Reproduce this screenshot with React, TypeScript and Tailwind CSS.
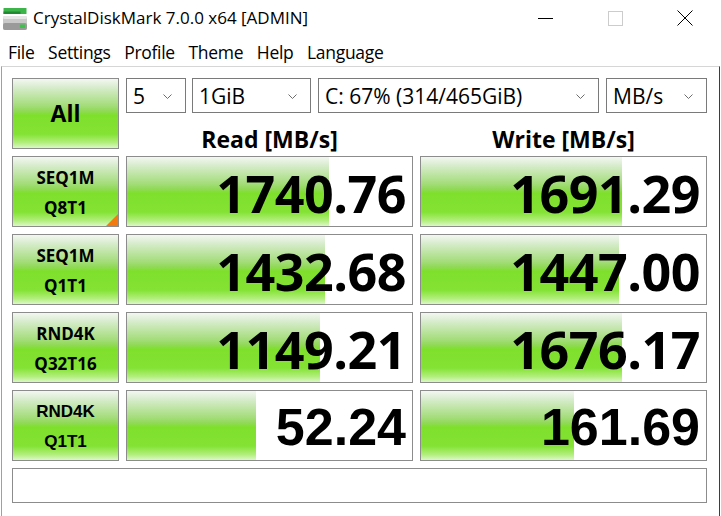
import React from "react";

const GREEN =
  "bg-[linear-gradient(to_bottom,#f3f7f1_0%,#d3ebc7_14%,#a5dd7c_38%,#8fd955_47%,#7fe02c_52%,#84e234_80%,#b2ee7c_92%,#dbf8c6_100%)]";

const menus = ["File", "Settings", "Profile", "Theme", "Help", "Language"];

const rows = [
  { l1: "SEQ1M", l2: "Q8T1", read: "1740.76", rw: 202, write: "1691.29", ww: 201, mark: true },
  { l1: "SEQ1M", l2: "Q1T1", read: "1432.68", rw: 198, write: "1447.00", ww: 198 },
  { l1: "RND4K", l2: "Q32T16", read: "1149.21", rw: 193, write: "1676.17", ww: 201 },
  { l1: "RND4K", l2: "Q1T1", read: "52.24", rw: 129, write: "161.69", ww: 153, narrow: true },
];

const Chevron = () => (
  <svg width="9" height="5" viewBox="0 0 9 5" className="shrink-0">
    <path d="M0.5 0.5 L4.5 4.5 L8.5 0.5" fill="none" stroke="#6d6d6d" strokeWidth="1" />
  </svg>
);

const Combo = ({ w, text }: { w: string; text: string }) => (
  <div className={`${w} h-[35px] border border-[#7a7a7a] bg-white flex items-center pl-[6px] pr-[13px] pt-[1px]`}>
    <span className="text-[21px] leading-none flex-1">{text}</span>
    <Chevron />
  </div>
);

const Cell = ({ value, width, narrow }: { value: string; width: number; narrow?: boolean }) => (
  <div
    className={`h-[71px] border border-[#8c8c8c] bg-white ${GREEN} bg-no-repeat flex items-center justify-end pr-[6px] pt-[3px]`}
    style={{ backgroundSize: `${width}px 100%` }}
  >
    <span
      className={
        narrow
          ? "font-['Liberation_Sans',sans-serif] font-bold text-[52px] leading-none"
          : "font-bold text-[52px] leading-none tracking-[-0.5px]"
      }
    >
      {value}
    </span>
  </div>
);

const DriveIcon = () => (
  <svg width="25" height="24" viewBox="0 0 25 24">
    <rect x="0.5" y="1" width="23" height="6" rx="0.5" fill="#3cb44a" />
    <rect x="0.5" y="4.5" width="17" height="2.5" fill="#1f8a30" />
    <rect x="0" y="9" width="24" height="14" rx="2" fill="#c9c9c9" />
    <rect x="0" y="16" width="24" height="7" rx="2" fill="#9a9a9a" />
    <rect x="0" y="9" width="24" height="3" rx="1.5" fill="#e6e6e6" />
    <rect x="17" y="17.5" width="5" height="3.5" fill="#3cc24a" />
  </svg>
);

export default function App() {
  return (
    <div className="w-[721px] h-[516px] bg-white overflow-hidden flex flex-col font-['Open_Sans',sans-serif] text-black">
      {/* title bar */}
      <div className="h-[36px] flex items-center shrink-0">
        <div className="ml-[3px] mt-[2px]">
          <DriveIcon />
        </div>
        <span className="ml-[5px] text-[17px]">CrystalDiskMark 7.0.0 x64 [ADMIN]</span>
        <div className="ml-auto flex h-full">
          <div className="w-[70px] flex items-center justify-center">
            <div className="w-[15px] h-px bg-black" />
          </div>
          <div className="w-[70px] flex items-center justify-center">
            <div className="w-[15px] h-[15px] border border-[#cccccc]" />
          </div>
          <div className="w-[70px] flex items-center justify-center mr-px">
            <svg width="16" height="16" viewBox="0 0 16 16">
              <path d="M0.5 0.5 L15.5 15.5 M15.5 0.5 L0.5 15.5" stroke="#000" strokeWidth="1" />
            </svg>
          </div>
        </div>
      </div>

      {/* menu bar */}
      <div className="h-[30px] flex items-center pl-[8px] pt-[2px] gap-[13.6px] text-[17.5px] tracking-[-0.3px] shrink-0">
        {menus.map((m) => (
          <span key={m}>{m}</span>
        ))}
      </div>

      {/* client area */}
      <div className="flex-1 ml-px mr-px border-t border-t-[#d6d6d6] border-l border-l-[#a0a0a0] border-r border-r-[#1f4756] pl-[10px] pt-[11px]">
        <div className="grid grid-cols-[107px_287px_287px] gap-[7px]">
          <div className={`h-[71px] border border-[#8c8c8c] ${GREEN} flex items-center justify-center`}>
            <span className="font-bold text-[23px] leading-none">All</span>
          </div>
          <div className="col-span-2 h-[71px] flex flex-col">
            <div className="flex h-[35px] shrink-0">
              <Combo w="w-[60px]" text="5" />
              <div className="w-[6px]" />
              <Combo w="w-[119px]" text="1GiB" />
              <div className="w-[7px]" />
              <Combo w="w-[281px]" text="C: 67% (314/465GiB)" />
              <div className="w-[7px]" />
              <Combo w="w-[101px]" text="MB/s" />
            </div>
            <div className="grid grid-cols-2 gap-[7px] pt-[15px]">
              <div className="text-center font-bold text-[23px] leading-none">Read [MB/s]</div>
              <div className="text-center font-bold text-[23px] leading-none">Write [MB/s]</div>
            </div>
          </div>

          {rows.map((r) => (
            <React.Fragment key={r.l1 + r.l2}>
              <div
                className={`relative h-[71px] border border-[#8c8c8c] ${GREEN} flex flex-col items-center justify-center pt-[3px] ${
                  r.narrow ? "font-['Liberation_Sans',sans-serif] text-[17px]" : "text-[17px]"
                } font-bold leading-[30px]`}
              >
                <span>{r.l1}</span>
                <span>{r.l2}</span>
                {r.mark && (
                  <svg width="12" height="12" viewBox="0 0 12 12" className="absolute right-0 bottom-0">
                    <path d="M12 0 L12 12 L0 12 Z" fill="#f27a12" />
                  </svg>
                )}
              </div>
              <Cell value={r.read} width={r.rw} narrow={r.narrow} />
              <Cell value={r.write} width={r.ww} narrow={r.narrow} />
            </React.Fragment>
          ))}

          <div className="col-span-3 h-[35px] border border-[#8c8c8c] bg-white" />
        </div>
      </div>
    </div>
  );
}
